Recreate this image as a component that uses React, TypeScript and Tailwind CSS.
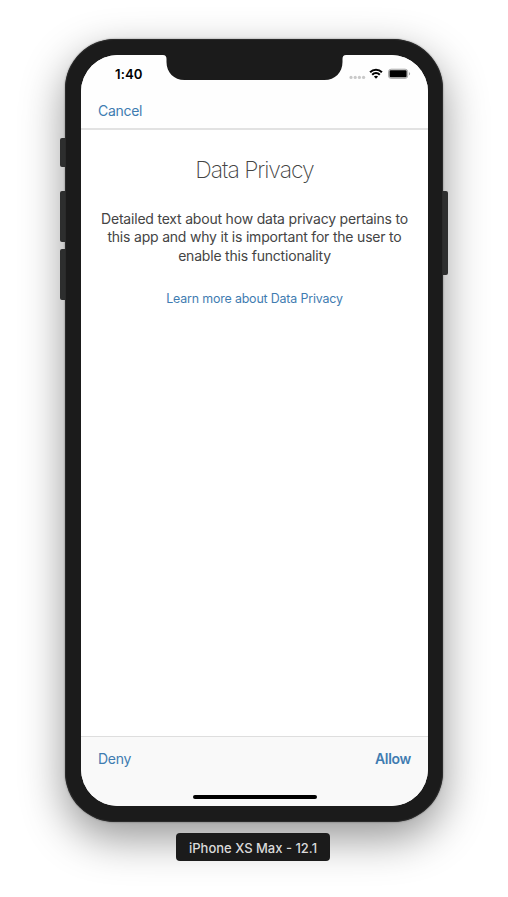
import React from "react";

function Notch() {
  return (
    <svg className="absolute top-0 left-[82px]" width="183" height="26" viewBox="0 0 183 26" fill="#1b1b1b">
      <path d="M0 -1V0C2.4 0 3.5 1.2 3.5 4V7C3.5 17.5 11 25 21.5 25H161.5C172 25 179.5 17.5 179.5 7V4C179.5 1.2 180.6 0 183 0V-1Z" />
    </svg>
  );
}

function StatusIcons() {
  return (
    <svg className="absolute top-[11px] left-[266px]" width="66" height="16" viewBox="0 0 66 16">
      <g fill="#c9c9c9">
        <circle cx="4" cy="11.4" r="1.6" />
        <circle cx="8.2" cy="11.4" r="1.6" />
        <circle cx="12.4" cy="11.4" r="1.6" />
        <circle cx="16.6" cy="11.4" r="1.6" />
      </g>
      <g transform="translate(22.4 2.6)">
        <g fill="none" stroke="#000" strokeWidth="2.1">
          <path d="M.7 3.6C4 .4 9.2 .4 12.5 3.6" />
          <path d="M2.8 6.1C5 4 8.2 4 10.4 6.1" />
        </g>
        <path d="M4.5 7.9C5.7 6.9 7.5 6.9 8.7 7.9L6.6 10.1Z" fill="#000" />
      </g>
      <rect x="41.5" y="3.2" width="19.2" height="9.2" rx="2.6" fill="#d8d8d8" stroke="#a5a5a5" strokeWidth="0.9" />
      <rect x="42.6" y="4.3" width="17" height="7" rx="1.2" fill="#000" />
      <path d="M62 6.2C63.5 6.6 63.5 8.9 62 9.3Z" fill="#a5a5a5" />
    </svg>
  );
}

function SideButton({ className }: { className: string }) {
  return <div className={`absolute w-[7px] bg-[#2d2e2e] ${className}`} />;
}

export default function App() {
  return (
    <main className="flex h-[897px] w-[508px] flex-col items-start overflow-hidden bg-white pt-[39px] font-['Inter','Liberation_Sans',sans-serif] text-[#444444]">
      <div className="relative ml-[65px] h-[782.5px] w-[378px] shrink-0 rounded-[50px] shadow-[0_16px_44px_rgba(0,0,0,0.42),0_0_2px_rgba(0,0,0,0.45)]">
        <SideButton className="-left-[5px] top-[99px] h-[29px] rounded-l-[2px]" />
        <SideButton className="-left-[5px] top-[152px] h-[51px] rounded-l-[2px]" />
        <SideButton className="-left-[5px] top-[210px] h-[51px] rounded-l-[2px]" />
        <SideButton className="-right-[5px] top-[152px] h-[84px] rounded-r-[2px]" />
        <div className="relative flex h-full w-full flex-col rounded-[50px] bg-[#1b1b1b] pt-4 pr-[15px] pb-[15.5px] pl-4 shadow-[inset_0_0_0_1px_#2a2a2a]">
          <div className="relative flex min-h-0 flex-1 flex-col overflow-hidden rounded-[37px] bg-white">
            <Notch />
            <StatusIcons />
            <header className="h-[75px] shrink-0 border-b-2 border-[#e2e2e2] bg-[#fefefe]">
              <div className="h-[37px] pt-[10px] pl-[34px] text-[13.2px] leading-[18px] font-semibold tracking-[0.1px] text-black">1:40</div>
              <div className="pt-[10px] pl-[17px] text-[14px] leading-[18px] tracking-[-0.3px] text-[#3f7cb1]">Cancel</div>
            </header>
            <section className="flex min-h-0 flex-1 flex-col items-center">
              <h1 className="mt-[25px] text-[23px] leading-[30px] font-extralight tracking-[-1.05px] whitespace-nowrap">Data Privacy</h1>
              <p className="mt-[24.5px] text-center text-[14px] leading-[18.5px] tracking-[-0.2px] whitespace-nowrap">
                Detailed text about how data privacy pertains to
                <br />
                this app and why it is important for the user to
                <br />
                enable this functionality
              </p>
              <div className="mt-[26px] text-[12.4px] leading-[16px] tracking-[-0.16px] whitespace-nowrap text-[#3f7cb1]">Learn more about Data Privacy</div>
            </section>
            <footer className="flex h-[70px] shrink-0 flex-col items-center border-t border-[#dedede] bg-[#f9f9f9]">
              <div className="flex w-full justify-between px-[17px] pt-[13px] text-[14px] leading-[18px] text-[#3f7cb1]">
                <span className="tracking-[-0.3px]">Deny</span>
                <span className="font-semibold tracking-[-0.3px]">Allow</span>
              </div>
              <div className="mt-[27px] h-[4px] w-[124px] rounded-full bg-black" />
            </footer>
          </div>
        </div>
      </div>
      <div className="relative mt-[11.5px] ml-[176px] flex h-7 w-[154px] shrink-0 items-center justify-center rounded-[4px] bg-[#1b1b1b] pt-[2px] text-[13px] leading-[16px] font-medium whitespace-nowrap text-[#dadada]">
        iPhone XS Max - 12.1
      </div>
    </main>
  );
}
